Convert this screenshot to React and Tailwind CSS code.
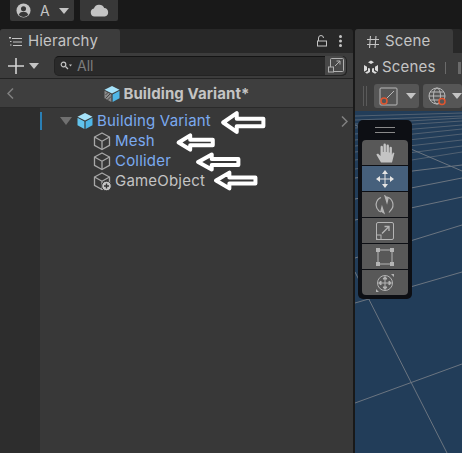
import React from "react";

const Caret = ({ className = "" }) => (
  <svg width="10" height="6" viewBox="0 0 10 6" className={className}><path d="M0 0h10L5 6z" fill="currentColor" /></svg>
);

const Cube = ({ plus }) => (
  <svg width="20" height="20" viewBox="0 0 20 20" className="shrink-0" fill="none" stroke="#a8a8a8" strokeWidth="1.3" strokeLinejoin="round">
    <path d="M10 2l7.500 4v8.400L10 18.500l-7.500-4.100V6z" />
    <path d="M2.500 6L10 10.200 17.500 6M10 10.200v8.300" />
    {plus && <g><circle cx="14.500" cy="15" r="4.800" fill="#c4c4c4" stroke="#383838" strokeWidth="1" /><path d="M14.500 12.500v5M12 15h5" stroke="#333" strokeWidth="1.400" /></g>}
  </svg>
);

const BlueCube = ({ size = 18 }) => (
  <svg width={size} height={size} viewBox="0 0 18 18" className="shrink-0">
    <path d="M9 1l7.500 3.800L9 8.600 1.500 4.800z" fill="#a5e2fa" />
    <path d="M1.500 5.800L8.400 9.500V17L1.500 13.300z" fill="#62c3ec" />
    <path d="M16.500 5.800L9.600 9.500V17l6.900-3.700z" fill="#4fb6e6" />
  </svg>
);

const VariantCube = () => (
  <svg width="18" height="18" viewBox="0 0 18 18" className="shrink-0">
    <path d="M9 1l7.500 3.800L9 8.600 1.500 4.800z" fill="#a5e2fa" />
    <path d="M1.500 5.800L8.400 9.500V17L1.500 13.300z" fill="#8a8a8a" />
    <path d="M2.500 10l3-3M2.500 13.500l5-5M4.500 15l3.500-3.500" stroke="#444" strokeWidth="1" />
    <path d="M16.500 5.800L9.600 9.500V17l6.900-3.700z" fill="#4fb6e6" />
  </svg>
);

const Arrow = ({ x, y, w, h }) => (
  <svg width={w} height={h} viewBox="0 0 44 24" preserveAspectRatio="none" className="absolute" style={{ left: x, top: y }}>
    <path d="M3 12L16 3v5.500h25.500v7H16V21z" fill="#383838" stroke="#fff" strokeWidth="4" strokeLinejoin="round" vectorEffect="non-scaling-stroke" />
  </svg>
);

const Row = ({ indent, icon, label, blue, children }) => (
  <div className={`flex items-center h-5 ${indent} gap-[3px]`}>
    {children}
    {icon}
    <span className={`text-[15px] tracking-[0.2px] ${blue ? "text-[#7baaf0]" : "text-[#c4c4c4]"}`}>{label}</span>
  </div>
);

const ToolBtn = ({ active, children, rounded = "" }) => (
  <div className={`flex h-[25px] w-[46px] items-center justify-center ${active ? "bg-[#46607c]" : "bg-[#585858]"} ${rounded}`}>
    {children}
  </div>
);

export default function App() {
  return (
    <div className="relative flex h-[453px] w-[462px] flex-col overflow-hidden bg-[#191919]" style={{ fontFamily: "Inter, 'Noto Sans', sans-serif" }}>
      {/* top bar */}
      <div className="flex h-[29px] shrink-0 items-start gap-[6px] pl-[10px]">
        <div className="flex h-[21px] w-[64px] items-center gap-[9px] rounded-b-[2px] bg-[#383838] pl-[6px]">
          <svg width="15" height="15" viewBox="0 0 16 16"><circle cx="8" cy="8" r="7.500" fill="#c4c4c4" /><circle cx="8" cy="6.200" r="2.700" fill="#383838" /><path d="M3 12.500c1-2.500 3-3.200 5-3.200s4 .7 5 3.200c-1.300 1.500-3 2.300-5 2.300s-3.700-.8-5-2.300z" fill="#383838" /></svg>
          <span className="text-[14px] leading-none text-[#c4c4c4]">A</span>
          <Caret className="text-[#c4c4c4]" />
        </div>
        <div className="flex h-[21px] w-[38px] items-center justify-center rounded-b-[2px] bg-[#383838]">
          <svg width="19" height="13" viewBox="0 0 19 13"><path d="M4.500 12.500a4 4 0 01-.6-7.900A5.500 5.500 0 0114.200 4a4.300 4.300 0 01.5 8.500z" fill="#c4c4c4" /></svg>
        </div>
      </div>

      <div className="flex min-h-0 flex-1">
        {/* hierarchy panel */}
        <div className="flex w-[353px] shrink-0 flex-col">
          <div className="flex h-[24px] shrink-0 items-end bg-[#282828] rounded-t-[3px]">
            <div className="flex h-[24px] w-[120px] items-center gap-[6px] rounded-t-[3px] bg-[#3c3c3c] pl-[9px] pt-px">
              <svg width="13" height="10" viewBox="0 0 13 10" stroke="#c4c4c4" strokeWidth="1" fill="none"><path d="M3 1.500h10M4 5h9M4 8.500h9M0 .5h2M1 0v2" /><path d="M1 4.500h1.500M1 8h1.500" /></svg>
              <span className="text-[15px] tracking-[0.15px] text-[#c4c4c4]">Hierarchy</span>
            </div>
            <div className="ml-auto mr-[11px] flex h-[24px] items-center gap-[11px]">
              <svg width="11" height="12" viewBox="0 0 11 12" fill="none" stroke="#c4c4c4" strokeWidth="1"><rect x=".5" y="6" width="9" height="5" /><path d="M1.500 6V3a2.500 2.500 0 015 0" /></svg>
              <svg width="3" height="12" viewBox="0 0 3 12" fill="#c4c4c4"><circle cx="1.500" cy="1.500" r="1.500" /><circle cx="1.500" cy="6" r="1.500" /><circle cx="1.500" cy="10.500" r="1.500" /></svg>
            </div>
          </div>
          <div className="flex h-[26px] shrink-0 items-center border-b border-[#232323] bg-[#3c3c3c] pl-[8px] pr-[6px]">
            <svg width="16" height="16" viewBox="0 0 16 16" stroke="#d2d2d2" strokeWidth="1.600"><path d="M8 0v16M0 8h16" /></svg>
            <Caret className="ml-[5px] text-[#c4c4c4]" />
            <div className="ml-[15px] flex h-[20px] flex-1 items-center rounded-[5px] border border-[#232323] border-t-[#141414] bg-[#2a2a2a]">
              <svg className="ml-[5px]" width="12" height="10" viewBox="0 0 12 10" fill="none" stroke="#c4c4c4" strokeWidth="1.200"><circle cx="3.500" cy="3.500" r="2.300" /><path d="M5.500 5.500L8 8" /><path d="M9 3.500h3L10.500 5.500z" fill="#c4c4c4" stroke="none" /></svg>
              <span className="ml-[5px] text-[14px] text-[#7d7d7d]">All</span>
              <div className="ml-auto flex h-[19px] w-[21px] items-center justify-center rounded-r-[5px] bg-[#484848]">
                <svg width="16" height="15" viewBox="0 0 16 15" fill="none" stroke="#b0b0b0" strokeWidth="1"><rect x="2.500" y=".5" width="13" height="13" rx="1" /><rect x=".5" y="9" width="5" height="5" fill="#484848" /><path d="M7 8l5-5M8.500 3H12v3.500" /></svg>
              </div>
            </div>
          </div>
          <div className="flex h-[29px] shrink-0 items-center justify-center border-b border-[#2a2a2a] bg-[#3e3e3e] relative">
            <svg className="absolute left-[7px] top-[9px]" width="7" height="11" viewBox="0 0 7 11" fill="none" stroke="#808080" strokeWidth="1.500"><path d="M6 .5L1 5.500 6 10.500" /></svg>
            <div className="flex items-center gap-[2px] pt-[2px]">
              <VariantCube />
              <span className="text-[15px] font-bold tracking-[0.1px] text-[#c4c4c4]">Building Variant*</span>
            </div>
          </div>
          <div className="relative flex min-h-0 flex-1 bg-[#383838]">
            <div className="w-[40px] shrink-0 bg-[#2d2d2d]" />
            <div className="relative min-w-0 flex-1 pt-[3px]">
              <div className="absolute left-0 top-[4px] h-[18px] w-[2px] bg-[#2a7fb5]" />
              <Row indent="pl-[20px]" blue label="Building Variant" icon={<BlueCube />}>
                <svg width="12" height="8" viewBox="0 0 12 8" className="mr-[1px]"><path d="M0 0h12L6 8z" fill="#707070" /></svg>
              </Row>
              <Row indent="pl-[52px]" blue label="Mesh" icon={<Cube />} />
              <Row indent="pl-[52px]" blue label="Collider" icon={<Cube />} />
              <Row indent="pl-[52px]" label="GameObject" icon={<Cube plus />} />
              <svg className="absolute right-[5px] top-[8px]" width="7" height="11" viewBox="0 0 7 11" fill="none" stroke="#808080" strokeWidth="1.500"><path d="M1 .5L6 5.500 1 10.500" /></svg>
            </div>
          </div>
        </div>

        <div className="w-[2px] shrink-0 bg-[#191919]" />

        {/* scene panel */}
        <div className="flex min-w-0 flex-1 flex-col">
          <div className="flex h-[24px] shrink-0 bg-[#282828] rounded-t-[3px]">
            <div className="flex h-[24px] w-[98px] items-center gap-[6px] rounded-t-[3px] bg-[#3c3c3c] pl-[12px] pt-px">
              <svg width="12" height="12" viewBox="0 0 12 12" stroke="#c4c4c4" strokeWidth="1.100"><path d="M3.500 0L2.500 12M9 0L8 12M0 3.500h12M0 8.500h12" /></svg>
              <span className="text-[15px] tracking-[0.2px] text-[#c4c4c4]">Scene</span>
            </div>
          </div>
          <div className="flex h-[28px] shrink-0 items-center bg-[#3c3c3c] pl-[8px] pt-px">
            <svg width="16" height="16" viewBox="0 0 16 16"><path d="M8 .5l3 1.800-3 1.800-3-1.800zM1 5l3 1.700v3.400L1 11.800zM15 5l-3 1.700v3.400l3 1.700zM7 8.500v3.500l-3 1.800L2 12.600 5 11V8zM9 8.500V12l3 1.800 2-1.200L11 11V8z" fill="#dcdcdc" /></svg>
            <span className="ml-[3px] text-[15px] tracking-[0.2px] text-[#c4c4c4]">Scenes</span>
            <div className="ml-[9px] h-[12px] w-px bg-[#6a6a6a]" />
            <div className="ml-[12px] h-[12px] w-[3px] bg-[#6a6a6a]" />
          </div>
          <div className="flex h-[30px] shrink-0 items-center bg-[#3c3c3c] pl-[8px]">
            <div className="mr-[7px] flex gap-[2px]"><div className="h-[20px] w-px bg-[#5a5a5a]" /><div className="h-[20px] w-px bg-[#5a5a5a]" /></div>
            <div className="flex h-[24px] w-[49px] items-center gap-[8px] rounded-[3px] bg-[#565656] pl-[5px]">
              <svg width="19" height="19" viewBox="0 0 19 19" fill="none"><rect x="1" y="1" width="17" height="17" rx="1" stroke="#b8b8b8" /><path d="M6 13L15 4" stroke="#b8b8b8" /><circle cx="5" cy="14" r="3" stroke="#e0562f" strokeWidth="1.500" fill="#565656" /></svg>
              <Caret className="text-[#c4c4c4]" />
            </div>
            <div className="ml-[4px] flex h-[24px] w-[40px] items-center gap-[5px] rounded-[3px] bg-[#565656] pl-[5px]">
              <svg width="19" height="19" viewBox="0 0 19 19" fill="none" stroke="#b8b8b8"><circle cx="9" cy="9" r="8" /><ellipse cx="9" cy="9" rx="3.500" ry="8" /><path d="M1 9h16M2 5h14M2 13h14" /><circle cx="14" cy="14.500" r="3" stroke="#e0562f" strokeWidth="1.500" fill="#565656" /></svg>
              <Caret className="text-[#c4c4c4]" />
            </div>
          </div>
          <div className="relative min-h-0 flex-1 overflow-hidden bg-[#223d59]">
            <svg className="absolute inset-0" width="107" height="342" viewBox="355 111 107 342" stroke="#6b7580" strokeWidth="1" fill="none">
              <path d="M355 178L462 165M355 199L462 178M355 220L462 197M355 258L462 225M355 303L462 272" />
              <path d="M355 169L462 152M355 160L462 146M355 152L462 140M355 146L462 134M355 140L462 129M355 134L462 125M355 128L462 121M355 124L462 118M355 120L462 116M355 116L462 113" strokeOpacity=".65" />
              <path d="M355 403L462 364" />
              <path d="M355 272L447 453" />
              <path d="M355 125L462 171" />
            </svg>
          </div>
        </div>
      </div>

      {/* arrows */}
      <Arrow x={220} y={110} w={46} h={25} />
      <Arrow x={176} y={133} w={39} h={19} />
      <Arrow x={195} y={152} w={46} h={20} />
      <Arrow x={213} y={170} w={45} h={21} />

      {/* overlay toolbar */}
      <div className="absolute left-[358px] top-[120px] flex w-[54px] flex-col items-center gap-px rounded-[5px] bg-[#0d0f14] px-1 pb-1">
        <div className="flex h-[19px] w-full flex-col items-center justify-center gap-[4px]">
          <div className="h-px w-[20px] bg-[#8a8a8a]" />
          <div className="h-px w-[20px] bg-[#8a8a8a]" />
        </div>
        <ToolBtn rounded="rounded-t-[4px]">
          <svg width="19" height="20" viewBox="0 0 19 20" fill="#c4c4c4"><path d="M5 19.500L.3 11.500l1.700-1 2.500 2.500V4a1.200 1.200 0 012.400 0v5h.6V1.800a1.200 1.200 0 012.400 0V9h.6V2.800a1.200 1.200 0 012.400 0V9.500h.6V5a1.200 1.200 0 012.400 0v7l1-2.500 1.500.5-2.400 9.500z" /></svg>
        </ToolBtn>
        <ToolBtn active>
          <svg width="20" height="20" viewBox="0 0 20 20" fill="#e4e4e4" stroke="#e4e4e4"><path d="M10 5v10M5 10h10" strokeWidth="1" /><path d="M10 1l3 4H7zM10 19l-3-4h6zM1 10l4-3v6zM19 10l-4 3V7z" stroke="none" /></svg>
        </ToolBtn>
        <ToolBtn>
          <svg width="20" height="20" viewBox="0 0 20 20" fill="none" stroke="#b4b4b4" strokeWidth="1.200"><path d="M6 2.500A8 8 0 004 16l2 1" /><path d="M12 2a8 8 0 014 13l-2 2.500" /><path d="M10 1l3 2.500-1 4z" fill="#b4b4b4" /><path d="M9 18l-3-2 1-4z" fill="#b4b4b4" /></svg>
        </ToolBtn>
        <ToolBtn>
          <svg width="18" height="18" viewBox="0 0 18 18" fill="none" stroke="#b4b4b4" strokeWidth="1"><rect x=".5" y=".5" width="17" height="17" rx="1.500" /><rect x=".5" y="13" width="4.500" height="4.500" /><path d="M6 11.500L13 4.500M8.500 4.500H13V9" strokeWidth="1.300" /></svg>
        </ToolBtn>
        <ToolBtn>
          <svg width="18" height="18" viewBox="0 0 18 18" fill="#b4b4b4" stroke="#b4b4b4"><rect x="0" y="0" width="4" height="4" stroke="none" /><rect x="14" y="0" width="4" height="4" stroke="none" /><rect x="0" y="14" width="4" height="4" stroke="none" /><rect x="14" y="14" width="4" height="4" stroke="none" /><path d="M4 2h10M4 16h10M2 4v10M16 4v10" /></svg>
        </ToolBtn>
        <ToolBtn rounded="rounded-b-[4px]">
          <svg width="20" height="20" viewBox="0 0 20 20" fill="none" stroke="#b4b4b4"><circle cx="10" cy="10" r="7.500" /><path d="M10 4v12M4 10h12" /><path d="M10 3.500l2 2.500H8zM10 16.500l-2-2.500h4zM3.500 10L6 8v4zM16.500 10L14 12V8z" fill="#b4b4b4" /><path d="M16 1h3v3zM1 19v-3l3 3z" fill="#b4b4b4" stroke="none" /></svg>
        </ToolBtn>
      </div>
    </div>
  );
}
